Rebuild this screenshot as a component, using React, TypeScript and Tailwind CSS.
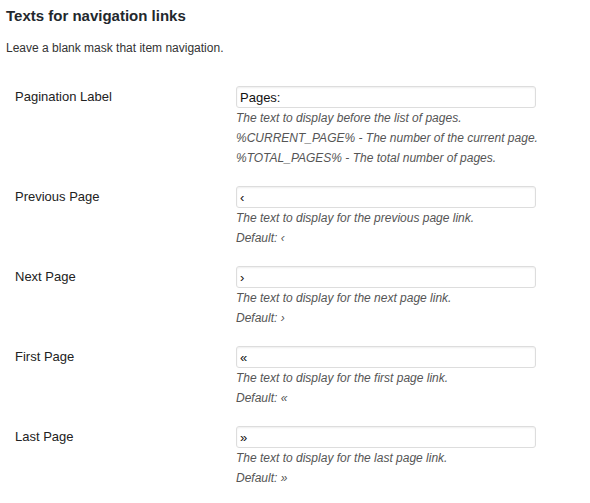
const ROWS = [
  {
    label: "Pagination Label",
    value: "Pages:",
    notes: [
      "The text to display before the list of pages.",
      "%CURRENT_PAGE% - The number of the current page.",
      "%TOTAL_PAGES% - The total number of pages.",
    ],
  },
  {
    label: "Previous Page",
    value: "\u2039",
    notes: ["The text to display for the previous page link.", "Default: \u2039"],
  },
  {
    label: "Next Page",
    value: "\u203A",
    notes: ["The text to display for the next page link.", "Default: \u203A"],
  },
  {
    label: "First Page",
    value: "\u00AB",
    notes: ["The text to display for the first page link.", "Default: \u00AB"],
  },
  {
    label: "Last Page",
    value: "\u00BB",
    notes: ["The text to display for the last page link.", "Default: \u00BB"],
  },
];

export default function App() {
  return (
    <div className="min-h-[503px] bg-white pl-[6px] pt-[6px] text-[#23282d] font-['Liberation_Sans',Arial,sans-serif]">
      <h2 className="text-[15px] leading-[20px] font-bold">Texts for navigation links</h2>
      <p className="mt-[14px] text-[12px] leading-[16px] text-[#333]">
        Leave a blank mask that item navigation.
      </p>

      {/* settings table */}
      <div className="mt-[30px] flex flex-col gap-[18px]">
        {ROWS.map((row) => (
          <div key={row.label} className="grid grid-cols-[230px_1fr]">
            <div className="pl-[9px] text-[13px] leading-[22px] text-[#222]">{row.label}</div>
            <div>
              <input
                readOnly
                value={row.value}
                className="block h-[22px] w-[300px] rounded-[3px] border border-[#dddddd] bg-white px-[3px] text-[13px] leading-[20px] text-[#111] shadow-[inset_0_1px_2px_rgba(0,0,0,0.07)] outline-none"
              />
              {row.notes.map((n) => (
                <p key={n} className="whitespace-nowrap text-[12px] leading-[20px] italic text-[#555]">
                  {n}
                </p>
              ))}
            </div>
          </div>
        ))}
      </div>
    </div>
  );
}
